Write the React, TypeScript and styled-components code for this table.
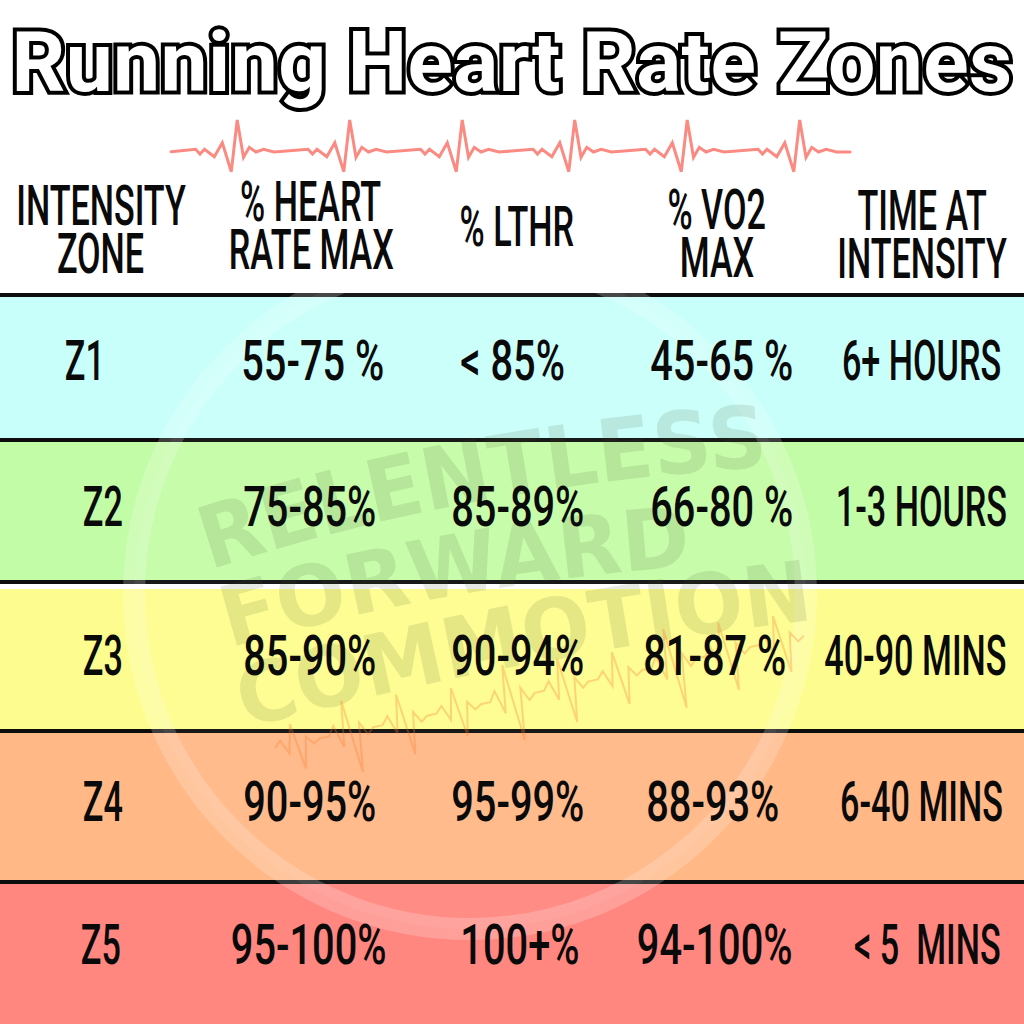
import React from "react";
import styled, { createGlobalStyle } from "styled-components";

const GlobalStyle = createGlobalStyle`
  html, body { margin: 0; padding: 0; background: #ffffff; }
  body { font-family: "Roboto", "Liberation Sans", sans-serif; }
`;

const Page = styled.div`
  width: 1024px;
  height: 1024px;
  overflow: hidden;
  background: #ffffff;
  display: flex;
  flex-direction: column;
`;

const TitleBar = styled.header`
  height: 118px;
  box-sizing: border-box;
  padding-top: 21px;
  display: flex;
  justify-content: center;
`;

const Title = styled.h1`
  margin: 0;
  font-family: "Roboto", "Liberation Sans", sans-serif;
  font-weight: 700;
  font-size: 84px;
  line-height: 84px;
  letter-spacing: 0.4px;
  color: #ffffff;
  -webkit-text-stroke: 8px #000000;
  paint-order: stroke fill;
  white-space: nowrap;
`;

const PulseStrip = styled.div`
  height: 57px;
  display: flex;
  svg { display: block; }
`;

const COLS = "202px 218px 194px 206px 204px";

const HeaderRow = styled.div`
  height: 118px;
  box-sizing: border-box;
  padding-bottom: 8px;
  display: grid;
  grid-template-columns: ${COLS};
  align-items: center;
`;

const HeaderCell = styled.div<{ $dy?: number }>`
  display: flex;
  flex-direction: column;
  align-items: center;
  transform: translateY(${(p) => p.$dy ?? 0}px);
`;

const Squeeze = styled.span<{ $sx: number }>`
  display: inline-block;
  white-space: pre;
  font-family: "Roboto", "Liberation Sans", sans-serif;
  font-weight: 500;
  font-size: 56px;
  color: #0a0a0a;
  transform: scaleX(${(p) => p.$sx});
  transform-origin: center;
`;

const HeadLine = styled(Squeeze)`
  line-height: 48px;
`;

const Table = styled.section`
  position: relative;
  flex: 1;
  display: flex;
  flex-direction: column;
`;

const Row = styled.div<{ $bg: string; $h: number; $gap?: number; $lift: number }>`
  height: ${(p) => p.$h}px;
  box-sizing: border-box;
  border-top: 4px solid #0d0d0d;
  background: ${(p) =>
    p.$gap
      ? `linear-gradient(#ffffff 0 ${p.$gap}px, ${p.$bg} ${p.$gap}px)`
      : p.$bg};
  padding-top: ${(p) => p.$gap ?? 0}px;
  padding-bottom: ${(p) => p.$lift}px;
  display: grid;
  grid-template-columns: ${COLS};
  align-items: center;
`;

const Cell = styled.div<{ $dx?: number }>`
  position: relative;
  z-index: 2;
  display: flex;
  justify-content: center;
  transform: translateX(${(p) => p.$dx ?? 0}px);
`;

const CellText = styled(Squeeze)`
  line-height: 56px;
`;

const Watermark = styled.svg`
  position: absolute;
  left: 0;
  top: 0;
  z-index: 1;
  pointer-events: none;
`;

function pulsePath(): string {
  const x0 = 171;
  const yOff = 118;
  const rel: [number, number][] = [
    [24.6, 149.3],
    [29, 154],
    [33.5, 149.3],
    [43.3, 156.7],
    [51.3, 142.7],
    [60.3, 171.7],
    [66.2, 120],
    [72.5, 157.3],
    [78.3, 147.3],
    [85, 152],
    [92.6, 149.3],
    [103, 152],
  ];
  const pts: string[] = [`${x0},${151.7 - yOff}`];
  for (let k = 0; k < 6; k++) {
    for (const [dx, y] of rel) {
      pts.push(`${(x0 + dx + k * 112.5).toFixed(1)},${(y - yOff).toFixed(1)}`);
    }
  }
  pts.push(`850,${152 - yOff}`);
  return "M" + pts.join(" L");
}

function smallPulse(): string {
  const pts: string[] = [];
  let x = 0;
  const ys = [0, -10, 14, -34, 44, -8, 6, 0];
  for (let k = 0; k < 10; k++) {
    for (let i = 0; i < ys.length; i++) {
      pts.push(`${(x + i * 6.5).toFixed(1)},${ys[i] * (0.6 + ((k * 37) % 10) / 20)}`);
    }
    x += 55;
  }
  return "M" + pts.join(" L");
}

type Zone = {
  cells: string[];
  bg: string;
  h: number;
  gap?: number;
  lift: number;
  dx: number[];
};

const zones: Zone[] = [
  { cells: ["Z1", "55-75 %", "< 85%", "45-65 %", "6+ HOURS"], bg: "#c9fffa", h: 145, lift: 14, dx: [-16, 2, -4, 5, -1] },
  { cells: ["Z2", "75-85%", "85-89%", "66-80 %", "1-3 HOURS"], bg: "#c3fca6", h: 142, lift: 8, dx: [2, -1, 1, 5, -1] },
  { cells: ["Z3", "85-90%", "90-94%", "81-87 %", "40-90 MINS"], bg: "#fdfd8f", h: 149, gap: 5, lift: 6, dx: [2, -1, 1, -2, -7] },
  { cells: ["Z4", "90-95%", "95-99%", "88-93%", "6-40 MINS"], bg: "#ffb886", h: 151, lift: 10, dx: [2, -1, 1, -4, -1] },
  { cells: ["Z5", "95-100%", "100+%", "94-100%", "< 5  MINS"], bg: "#ff8780", h: 144, lift: 18, dx: [0, -2, 3, -2, 5] },
];

const headers: { lines: string[]; dy: number }[] = [
  { lines: ["INTENSITY", "ZONE"], dy: 0 },
  { lines: ["% HEART", "RATE MAX"], dy: -4 },
  { lines: ["% LTHR"], dy: -3 },
  { lines: ["% VO2", "MAX"], dy: 4 },
  { lines: ["TIME AT", "INTENSITY"], dy: 5 },
];

const scaleFor = (t: string) => (/[A-Z]/.test(t) ? 0.61 : 0.71);

export default function App() {
  return (
    <>
      <GlobalStyle />
      <Page>
        <TitleBar>
          <Title>Running Heart Rate Zones</Title>
        </TitleBar>
        <PulseStrip>
          <svg width="1024" height="57" viewBox="0 0 1024 57">
            <path
              d={pulsePath()}
              fill="none"
              stroke="#fb8a82"
              strokeWidth="3"
              strokeLinejoin="miter"
              strokeLinecap="round"
            />
          </svg>
        </PulseStrip>
        <HeaderRow>
          {headers.map((h, i) => (
            <HeaderCell key={i} $dy={h.dy}>
              {h.lines.map((l) => (
                <HeadLine key={l} $sx={0.61}>
                  {l}
                </HeadLine>
              ))}
            </HeaderCell>
          ))}
        </HeaderRow>
        <Table>
          {zones.map((z) => (
            <Row key={z.cells[0]} $bg={z.bg} $h={z.h} $gap={z.gap} $lift={z.lift}>
              {z.cells.map((c, i) => (
                <Cell key={i} $dx={z.dx[i]}>
                  <CellText $sx={scaleFor(c)}>{c}</CellText>
                </Cell>
              ))}
            </Row>
          ))}
          <Watermark width="1024" height="731" viewBox="0 0 1024 731">
            <defs>
              <path id="arcA" d="M 210 277 Q 470 190 790 172" />
              <path id="arcB" d="M 230 355 Q 450 290 705 272" />
              <path id="arcC" d="M 245 435 Q 530 360 828 325" />
            </defs>
            <circle cx="470" cy="300" r="336" fill="rgba(255,255,255,0.05)" stroke="rgba(255,255,255,0.2)" strokeWidth="22" />
            <g fill="rgba(70,85,35,0.13)" fontFamily="'DejaVu Sans', sans-serif" fontWeight="900">
              <text fontSize="86">
                <textPath href="#arcA" textLength="570" lengthAdjust="spacingAndGlyphs">RELENTLESS</textPath>
              </text>
              <text fontSize="84">
                <textPath href="#arcB" textLength="470" lengthAdjust="spacingAndGlyphs">FORWARD</textPath>
              </text>
              <text fontSize="84">
                <textPath href="#arcC" textLength="580" lengthAdjust="spacingAndGlyphs">COMMOTION</textPath>
              </text>
            </g>
            <path
              d={smallPulse()}
              transform="translate(275 455) rotate(-12)"
              fill="none"
              stroke="rgba(255,120,40,0.3)"
              strokeWidth="2"
            />
          </Watermark>
        </Table>
      </Page>
    </>
  );
}
